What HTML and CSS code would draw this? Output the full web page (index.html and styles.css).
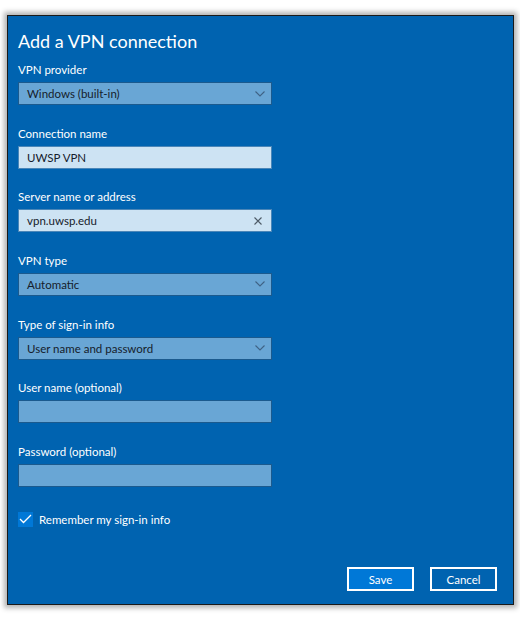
FILE: index.html
```html
<!DOCTYPE html>
<html lang="en">
<head>
    <meta charset="UTF-8">
    <title>Add a VPN connection</title>
    <link rel="stylesheet" href="styles.css">
</head>
<body>
    <div class="dialog">
        <h1>Add a VPN connection</h1>

        <div class="field">
            <label>VPN provider</label>
            <div class="box select">
                <span>Windows (built-in)</span>
                <svg class="chevron" width="10" height="6" viewBox="0 0 10 6"><polyline points="0.5,0.5 5,5 9.5,0.5" fill="none" stroke="#3f6285" stroke-width="1.1"/></svg>
            </div>
        </div>

        <div class="field">
            <label>Connection name</label>
            <div class="box text"><span>UWSP VPN</span></div>
        </div>

        <div class="field">
            <label>Server name or address</label>
            <div class="box text">
                <span>vpn.uwsp.edu</span>
                <svg class="clear" width="8" height="8" viewBox="0 0 8 8"><path d="M0.5 0.5 L7.5 7.5 M7.5 0.5 L0.5 7.5" stroke="#4d5a66" stroke-width="1.1"/></svg>
            </div>
        </div>

        <div class="field">
            <label>VPN type</label>
            <div class="box select">
                <span>Automatic</span>
                <svg class="chevron" width="10" height="6" viewBox="0 0 10 6"><polyline points="0.5,0.5 5,5 9.5,0.5" fill="none" stroke="#3f6285" stroke-width="1.1"/></svg>
            </div>
        </div>

        <div class="field">
            <label>Type of sign-in info</label>
            <div class="box select">
                <span>User name and password</span>
                <svg class="chevron" width="10" height="6" viewBox="0 0 10 6"><polyline points="0.5,0.5 5,5 9.5,0.5" fill="none" stroke="#3f6285" stroke-width="1.1"/></svg>
            </div>
        </div>

        <div class="field">
            <label>User name (optional)</label>
            <div class="box select"></div>
        </div>

        <div class="field">
            <label>Password (optional)</label>
            <div class="box select"></div>
        </div>

        <div class="check-row">
            <div class="checkbox">
                <svg width="13" height="10" viewBox="0 0 13 10"><polyline points="1,5 4.5,8.5 12,1" fill="none" stroke="#fff" stroke-width="1.3"/></svg>
            </div>
            <span>Remember my sign-in info</span>
        </div>

        <div class="actions">
            <button class="save">Save</button>
            <button class="cancel">Cancel</button>
        </div>
    </div>
</body>
</html>
```

FILE: styles.css
```css
:root {
    --accent: #0063b0;
    --field: #69a6d5;
    --field-light: #cde3f3;
    --field-border: #1b5a8e;
    --button: #0078d7;
}

* {
    box-sizing: border-box;
    margin: 0;
    padding: 0;
}

body {
    background: #ffffff;
    font-family: Lato, "Noto Sans", sans-serif;
    width: 520px;
    height: 617px;
    overflow: hidden;
}

.dialog {
    margin: 15px 0 0 7px;
    width: 507px;
    height: 590px;
    background: var(--accent);
    border: 1px solid #1a1a1a;
    box-shadow: 0 0 5px 3px rgba(0, 0, 0, 0.3);
    padding: 0 16px 13px 10px;
    display: flex;
    flex-direction: column;
    color: #ffffff;
}

h1 {
    font-size: 18px;
    font-weight: 400;
    line-height: 24px;
    margin-top: 13px;
    margin-bottom: 9px;
}

.field {
    display: flex;
    flex-direction: column;
    gap: 4px;
    margin-bottom: 20.67px;
}

label {
    font-size: 11.5px;
    line-height: 16px;
}

.box {
    width: 254px;
    height: 23px;
    border: 1px solid var(--field-border);
    display: flex;
    align-items: center;
    justify-content: space-between;
    padding: 0 6px 0 8px;
    font-size: 11.5px;
    color: #15202b;
}

.select {
    background: var(--field);
}

.text {
    background: var(--field-light);
    border-color: #4a86b8;
}

.clear {
    margin-right: 3px;
}

.check-row {
    display: flex;
    align-items: center;
    gap: 6px;
    margin-top: 4px;
    font-size: 11.5px;
}

.checkbox {
    width: 15px;
    height: 15px;
    background: var(--button);
    display: flex;
    align-items: center;
    justify-content: center;
}

.actions {
    margin-top: auto;
    display: flex;
    justify-content: flex-end;
    gap: 16px;
}

button {
    width: 67px;
    height: 24px;
    border: 2px solid #ffffff;
    color: #ffffff;
    font-family: inherit;
    font-size: 11.5px;
}

.save {
    background: var(--button);
}

.cancel {
    background: var(--accent);
}
```
